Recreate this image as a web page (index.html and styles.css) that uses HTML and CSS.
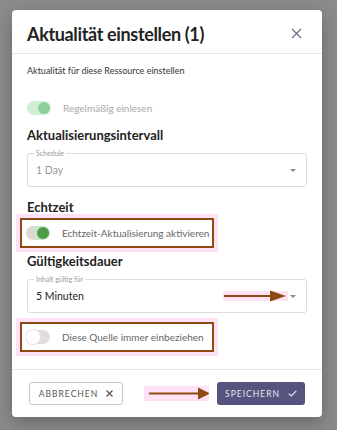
FILE: index.html
```html
<!DOCTYPE html>
<html lang="de">
  <head>
    <meta charset="UTF-8" />
    <meta name="viewport" content="width=device-width, initial-scale=1.0" />
    <title>Aktualität einstellen</title>
    <link rel="stylesheet" href="styles.css">
  </head>
  <body>
    <div class="backdrop">
      <div class="dialog">
        <div class="dialog-header">
          <h1 class="dialog-title">Aktualität einstellen (1)</h1>
          <button class="close-btn" aria-label="Schließen">
            <svg width="11" height="11" viewBox="0 0 11 11">
              <path d="M1 1 L10 10 M10 1 L1 10" stroke="#6c7088" stroke-width="1.3" fill="none" />
            </svg>
          </button>
        </div>

        <div class="dialog-body">
          <p class="dialog-subtitle">Aktualität für diese Ressource einstellen</p>

          <div class="switch-row disabled">
            <span class="switch on"><span class="thumb"></span></span>
            <span class="switch-label">Regelmäßig einlesen</span>
          </div>

          <h3 class="section-title">Aktualisierungsintervall</h3>
          <div class="select-field disabled">
            <span class="field-label">Schedule</span>
            <span class="field-value">1 Day</span>
            <span class="caret"></span>
          </div>

          <h3 class="section-title">Echtzeit</h3>
          <div class="switch-row marked">
            <span class="switch on active"><span class="thumb"></span></span>
            <span class="switch-label">Echtzeit-Aktualisierung aktivieren</span>
          </div>

          <h3 class="section-title">Gültigkeitsdauer</h3>
          <div class="select-field">
            <span class="field-label">Inhalt gültig für</span>
            <span class="field-value">5 Minuten</span>
            <svg class="pointer pointer-select" width="65" height="12" viewBox="0 0 65 12">
              <rect x="0" y="1" width="65" height="10" fill="#fde2f6" />
              <path d="M1 6 H50" stroke="#8e4a12" stroke-width="2" />
              <path d="M47 0.5 L63 6 L47 11.5 Z" fill="#8e4a12" />
            </svg>
            <span class="caret"></span>
          </div>

          <div class="switch-row marked">
            <span class="switch off"><span class="thumb"></span></span>
            <span class="switch-label">Diese Quelle immer einbeziehen</span>
          </div>
        </div>

        <div class="dialog-footer">
          <button class="btn btn-outline">
            ABBRECHEN
            <svg width="7" height="7" viewBox="0 0 7 7">
              <path d="M0.5 0.5 L6.5 6.5 M6.5 0.5 L0.5 6.5" stroke="#555" stroke-width="1.2" fill="none" />
            </svg>
          </button>
          <svg class="pointer pointer-save" width="65" height="15" viewBox="0 0 65 15">
            <rect x="0" y="0" width="65" height="15" fill="#fde2f6" />
            <path d="M5 7.5 H56" stroke="#8e4a12" stroke-width="2" />
            <path d="M54 1.5 L66 7.5 L54 13.5 Z" fill="#8e4a12" />
          </svg>
          <button class="btn btn-primary">
            SPEICHERN
            <svg width="9" height="7" viewBox="0 0 9 7">
              <path d="M0.7 3.6 L3.2 6 L8.3 0.8" stroke="#e6e6f0" stroke-width="1.2" fill="none" />
            </svg>
          </button>
        </div>
      </div>
    </div>
  </body>
</html>
```

FILE: styles.css
```css
* {
  margin: 0;
  padding: 0;
  box-sizing: border-box;
}

body {
  font-family: Lato, "Noto Sans", sans-serif;
  background: #8b8b8b;
  color: #222;
  width: 337px;
  height: 430px;
  overflow: hidden;
}

.backdrop {
  padding: 10px 15px 0 12px;
}

.dialog {
  width: 310px;
  background: #fff;
  border-radius: 4px;
  box-shadow: 0 6px 18px rgba(0, 0, 0, 0.25);
}

.dialog-header {
  height: 44px;
  display: flex;
  align-items: center;
  justify-content: space-between;
  padding: 4px 20px 0 15px;
  border-bottom: 1px solid #e8e8e8;
}

.dialog-title {
  font-size: 18px;
  font-weight: 700;
  color: #222;
  letter-spacing: -0.35px;
}

.close-btn {
  background: none;
  border: none;
  display: flex;
  cursor: pointer;
}

.dialog-body {
  display: flex;
  flex-direction: column;
  padding: 11px 15px 17px 15px;
}

.dialog-subtitle {
  font-size: 9px;
  color: #333;
  line-height: 12px;
  margin-bottom: 20px;
}

.switch-row {
  display: flex;
  align-items: center;
  gap: 12px;
  height: 22px;
  white-space: nowrap;
}

.switch-row.disabled {
  margin-bottom: 3px;
}

.switch-row.marked {
  width: 194px;
  height: 30px;
  margin: 2px 0 0 -7px;
  padding-left: 4px;
  border: 2px solid #8e4a12;
  box-shadow: 0 0 0 4px #fde2f6;
}

.switch {
  position: relative;
  width: 24px;
  height: 14px;
  border-radius: 7px;
  flex-shrink: 0;
}

.switch .thumb {
  position: absolute;
  top: 1px;
  width: 12px;
  height: 12px;
  border-radius: 50%;
}

.switch.on {
  background: #c2e9ca;
}

.switch.on .thumb {
  right: 1px;
  background: #68c07a;
}

.switch.on.active {
  background: linear-gradient(90deg, #ecd3d3 0%, #c2e9ca 60%);
}

.switch.on.active .thumb {
  background: #4f9c48;
}

.switch.off {
  background: #dedede;
}

.switch.off .thumb {
  left: 0;
  top: 0;
  width: 14px;
  height: 14px;
  background: #fff;
  box-shadow: 0 0 0 1px #fbd7ee;
}

.switch-label {
  font-size: 10px;
  color: #666;
}

.switch-row.disabled .switch-label {
  color: #a9a9a9;
}

.switch-row.disabled .switch {
  opacity: 0.75;
}

.section-title {
  font-size: 13px;
  font-weight: 700;
  color: #222;
  margin-top: 4px;
  line-height: 18px;
}

.select-field {
  position: relative;
  display: flex;
  align-items: center;
  height: 34px;
  margin: 9px 0 7px;
  padding: 0 10px 0 8px;
  border: 1px solid #dcdcdc;
  border-radius: 3px;
}

.field-label {
  position: absolute;
  top: -5px;
  left: 6px;
  padding: 0 2px;
  background: #fff;
  font-size: 7px;
  line-height: 9px;
  color: #999;
}

.field-value {
  flex: 1;
  font-size: 10.5px;
  color: #222;
}

.select-field.disabled .field-value {
  color: #9b9b9b;
}

.caret {
  width: 0;
  height: 0;
  border-left: 3px solid transparent;
  border-right: 3px solid transparent;
  border-top: 3px solid #888;
}

.pointer-select {
  margin-right: 2px;
}

.dialog-footer {
  display: flex;
  align-items: center;
  height: 48px;
  padding: 0 17px;
  border-top: 1px solid #e8e8e8;
}

.pointer-save {
  margin-left: 21px;
}

.btn {
  height: 23px;
  border-radius: 3px;
  font-family: Lato, "Noto Sans", sans-serif;
  font-size: 8.5px;
  letter-spacing: 1px;
  cursor: pointer;
  display: flex;
  align-items: center;
  justify-content: center;
  gap: 8px;
}

.btn-outline {
  background: #fff;
  color: #555;
  border: 1px solid #c8c8c8;
  width: 94px;
}

.btn-primary {
  background: #56537e;
  color: #e6e6f0;
  border: none;
  width: 88px;
  margin-left: auto;
}
```
